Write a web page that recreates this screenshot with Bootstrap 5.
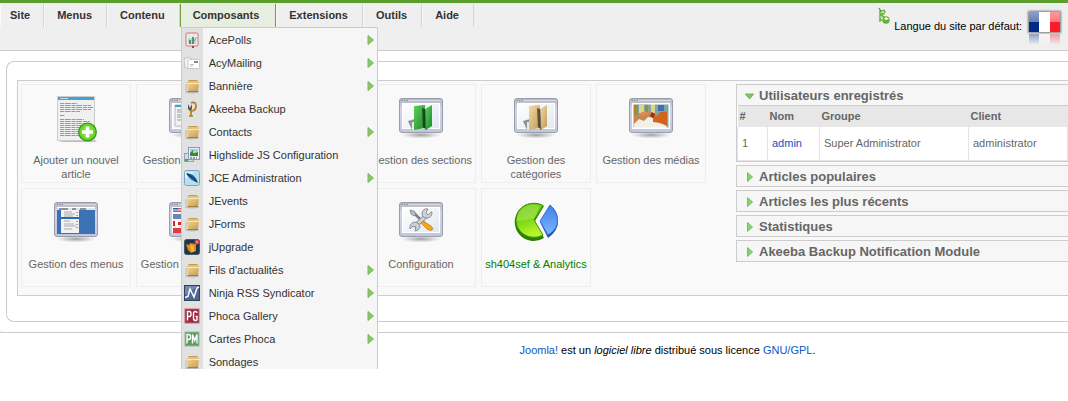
<!DOCTYPE html>
<html lang="fr">
<head>
<meta charset="utf-8">
<meta name="viewport" content="width=device-width, initial-scale=1">
<title>Administration</title>
<link href="https://cdn.jsdelivr.net/npm/bootstrap@5.3.0/dist/css/bootstrap.min.css" rel="stylesheet">
<style>
body{font-family:"Liberation Sans",Arial,sans-serif;font-size:11px;line-height:14px;color:#666;background:#fff}
a{color:#0b55c4;text-decoration:none}
.defs{width:0;height:0}
.topbar{background:#efefef;border-top:3px solid #5c9e2d;border-bottom:1px solid #ccc;height:51px}
.mainmenu{border-top:1px solid #e4ecdc}
.mainmenu>li{border-right:1px solid #d4d4d4;border-left:1px solid #f8f8f8}
.mainmenu>li>a{display:block;font-weight:bold;color:#333;line-height:23px;padding:0 14px 0 12px}
.mainmenu>li:first-child>a{padding-left:9px;padding-right:13px}
.mainmenu>li.opened{background:#e7eddf;border-left:1px solid #6fa03f;border-right:1px solid #6fa03f}
.mainmenu>li.opened>a{padding-right:16px}
.submenu{top:23px;left:0;width:197px;max-height:342px;overflow:hidden;border:1px solid #ccc;border-bottom:0;background:linear-gradient(to right,#e1e1e1 21px,#f6f6f6 21px);z-index:5}
.submenu a{height:23px;color:#333;padding:0 3px 0 2px;gap:9px}
.submenu svg{width:16px;height:16px;flex:none}
.submenu .more{width:7px;height:10px;margin-left:auto}
.lang{color:#000;padding:4px 4px 0 0}
.outerbox{border:1px solid #ccc;border-width:0 0 1px 1px;border-bottom-left-radius:8px;margin-left:-5px;padding:10px 0 10px 10px}
.innerbox{border:1px solid #ccc;border-right:0;border-radius:8px 0 0 8px;padding:18px 0 25px 10px}
.workarea{background:#f9f9f9;border:1px solid #ccc;border-right:0;padding:3px 0 8px 3px;column-gap:30px}
.cpanel{display:grid;grid-template-columns:repeat(6,110px);gap:5px}
.tile{height:99px;border:1px solid #eee;color:#666;text-align:center;padding:9px 2px 0}
.tile svg{display:block;width:48px;height:48px;margin:0 auto 11px}
.tile.analytics{color:green;padding-left:0;padding-right:0;white-space:nowrap}
.sliders{gap:3px}
.slider{border:1px solid #ccc;border-right:0;background:#f6f6f6}
.slider h3{margin:0;font-size:13px;line-height:20px;font-weight:bold}
.slider button{border:0;background:none;color:#666;font-weight:bold;padding:2px 0 0 8px;line-height:18px;gap:5px}
.slider button svg{width:9px;height:10px}
.users{width:100%;background:#fff;border-top:1px solid #ccc}
.users th{background:#e7e7e7;height:21px;padding:0 2px;line-height:20px;font-size:11px}
.users td{height:34px;padding:0 4px;border-right:1px solid #e5e5e5}
.users td:first-child{border-left:1px solid #e5e5e5}
.users tbody tr{border-bottom:1px solid #e5e5e5}
.legal{padding:10px 0 0 25%;color:#000}
</style>
</head>
<body class="min-vh-100">
<svg class="defs position-absolute" aria-hidden="true">
<defs>
<linearGradient id="gFrame" x1="0" y1="0" x2="0" y2="1"><stop offset="0" stop-color="#b4b4c0"/><stop offset=".3" stop-color="#d2d5e2"/><stop offset="1" stop-color="#c0c6dc"/></linearGradient>
<linearGradient id="gScreen" x1="0" y1="0" x2="1" y2="1"><stop offset="0" stop-color="#fff"/><stop offset="1" stop-color="#e3e7f0"/></linearGradient>
<linearGradient id="gGreen" x1="0" y1="0" x2="1" y2="1"><stop offset="0" stop-color="#5fd060"/><stop offset="1" stop-color="#1c8a2b"/></linearGradient>
<linearGradient id="gTan" x1="0" y1="0" x2="1" y2="1"><stop offset="0" stop-color="#f4dca6"/><stop offset="1" stop-color="#c29a55"/></linearGradient>
<linearGradient id="gPie" x1="0" y1="0" x2=".3" y2="1"><stop offset="0" stop-color="#5cb50c"/><stop offset=".5" stop-color="#74d40f"/><stop offset="1" stop-color="#b6f52c"/></linearGradient>
<linearGradient id="gBlue" x1="0" y1="0" x2="0" y2="1"><stop offset="0" stop-color="#3f7fe8"/><stop offset="1" stop-color="#7fb6ff"/></linearGradient>
<linearGradient id="gBox" x1="0" y1="0" x2="1" y2="1"><stop offset="0" stop-color="#f0d594"/><stop offset="1" stop-color="#c79a4d"/></linearGradient>
<radialGradient id="gShade"><stop offset="0" stop-color="#888" stop-opacity=".8"/><stop offset="1" stop-color="#999" stop-opacity="0"/></radialGradient>
<radialGradient id="gPlus"><stop offset="0" stop-color="#9be84a"/><stop offset="1" stop-color="#63cf22"/></radialGradient>
<symbol id="frame" viewBox="0 0 48 48"><ellipse cx="24" cy="41" rx="20" ry="3.5" fill="url(#gShade)"/><rect x="2.5" y="4.500" width="43" height="34" rx="2.500" fill="url(#gFrame)" stroke="#9a9dac"/><path d="M4 6.500h40" stroke="#d9dae0"/><path d="M4.500 6.500h7" stroke="#8a8d98" stroke-dasharray="1.500 1"/><rect x="5.500" y="9.500" width="37" height="25" fill="url(#gScreen)" stroke="#fff"/></symbol>
<symbol id="box" viewBox="0 0 16 16"><ellipse cx="8" cy="14" rx="7" ry="1.500" fill="#b8b8b8"/><path d="M1 7l2-2v9l-2-2z" fill="#d2ccbd"/><path d="M4 2h10l1 3H3z" fill="#e3c27e"/><path d="M5 2h8v1H5z" fill="#c19a55"/><path d="M3 5h12l-1 9H4z" fill="url(#gBox)"/><path d="M3 5.500h12" stroke="#f9e7b8"/><path d="M4 13.500h10" stroke="#a57c38"/></symbol>
<symbol id="arrow" viewBox="0 0 7 10"><path d="M1 0.500L6.500 5 1 9.500z" fill="#8cc86a" stroke="#79b75c"/></symbol>
<symbol id="tri" viewBox="0 0 9 10"><path d="M2.500 .5L7.500 5l-5 4.500z" fill="#8bd46b" stroke="#7dbb5e"/></symbol>
<symbol id="trid" viewBox="0 0 9 10"><path d="M.5 3h8L5 7.500H4z" fill="#7bc957" stroke="#71b14f"/></symbol>
<symbol id="folder" viewBox="0 0 48 48"><path d="M11 27l7-2v11h-3z" fill="#8e9094"/><path d="M15 28h3v8h-3z" fill="#e8e8ea"/><path d="M17 12l11-1v23l-11 2z"/><path d="M25 14l5 2-1 20-3-3z" fill="#0008"/><path d="M28 15l7-4v21l-6 4z"/><path d="M28 15l1 21" stroke="#0004" fill="none"/></symbol>
</defs>
</svg>

<header class="topbar d-flex justify-content-between">
  <ul class="mainmenu list-unstyled d-flex align-items-start flex-grow-1 m-0">
    <li><a href="#">Site</a></li>
    <li><a href="#">Menus</a></li>
    <li><a href="#">Contenu</a></li>
    <li class="opened position-relative"><a href="#">Composants</a>
      <ul class="submenu list-unstyled position-absolute m-0">
        <li><a href="#" class="d-flex align-items-center"><svg viewBox="0 0 16 16"><rect x="2" y="1" width="12" height="13" rx="1" fill="#eee" stroke="#d17777"/><path d="M5 2h5v2H5z" fill="#fff" stroke="#bbb" stroke-width=".5"/><rect x="4" y="6" width="8" height="6" fill="#b9d5df"/><path d="M5 12V8h2v4zM8 12V5h2v7z" fill="#4f9a6d"/><path d="M10.500 9l2-4" stroke="#999"/><path d="M8 14h2v2H8z" fill="#c33"/></svg>AcePolls<svg class="more"><use href="#arrow"/></svg></a></li>
        <li><a href="#" class="d-flex align-items-center"><svg viewBox="0 0 16 16"><path d="M0 4l5-2 3 2v9H1z" fill="#f4f4f4" stroke="#c4c4c4"/><rect x="4" y="4.500" width="11.500" height="9" rx="1" fill="#fff" stroke="#c9c9c9"/><path d="M10 6h2v2h-2z" fill="#6787d3"/><path d="M12 6h2v2h-2z" fill="#d56262"/><path d="M6 9.500h4M6 11h3" stroke="#aaa" stroke-width=".7"/></svg>AcyMailing<svg class="more"><use href="#arrow"/></svg></a></li>
        <li><a href="#" class="d-flex align-items-center"><svg><use href="#box"/></svg>Bannière<svg class="more"><use href="#arrow"/></svg></a></li>
        <li><a href="#" class="d-flex align-items-center"><svg viewBox="0 0 16 16"><path d="M7 2q5-2 5 3 0 5-5 5M7 9v6M5 15h4" fill="none" stroke="#bb7a1c" stroke-width="1.700"/><path d="M4 3l2 4 2-4v5L6 10 4 8z" fill="#555"/></svg>Akeeba Backup</a></li>
        <li><a href="#" class="d-flex align-items-center"><svg><use href="#box"/></svg>Contacts<svg class="more"><use href="#arrow"/></svg></a></li>
        <li><a href="#" class="d-flex align-items-center"><svg viewBox="0 0 16 16"><rect x=".5" y="6.500" width="9" height="8" fill="#cfe0dc" stroke="#8ba6ae"/><path d="M1 12h3v2H1z" fill="#4f9d4a"/><rect x="4.500" y=".5" width="11" height="12" fill="#e7effa" stroke="#8598c4"/><rect x="6" y="2" width="8" height="7" fill="#a4cdf0"/><path d="M6 9V6l3-3 2 3 3-1v4z" fill="#368b35"/><path d="M9 4h2v2H9z" fill="#e3d94e"/><path d="M6 11h7" stroke="#444" stroke-dasharray="2 1"/></svg>Highslide JS Configuration</a></li>
        <li><a href="#" class="d-flex align-items-center"><svg viewBox="0 0 16 16"><rect x=".5" y=".5" width="15" height="15" rx="2" fill="#b8def0" stroke="#74a9c6"/><path d="M1 2h9L1 9z" fill="#e0f3fb"/><path d="M2 3q9 0 12 10Q5 10 2 3z" fill="#1f5f9c"/><path d="M3 4q6 2 10 8" stroke="#082f59" fill="none"/></svg>JCE Administration<svg class="more"><use href="#arrow"/></svg></a></li>
        <li><a href="#" class="d-flex align-items-center"><svg><use href="#box"/></svg>JEvents</a></li>
        <li><a href="#" class="d-flex align-items-center"><svg><use href="#box"/></svg>JForms</a></li>
        <li><a href="#" class="d-flex align-items-center"><svg viewBox="0 0 16 16"><rect x=".5" y=".5" width="15" height="15" rx="2" fill="#1f3647" stroke="#41596b"/><path d="M2 5l3 1 1-2 6 1v7l-5 2-3-3z" fill="#e08a1a"/><path d="M6 6l4 1v6l-3-1z" fill="#f6b53c"/><circle cx="13" cy="3" r="2.500" fill="#d4404c"/><path d="M12 3h2" stroke="#fff" stroke-width=".8"/></svg>jUpgrade</a></li>
        <li><a href="#" class="d-flex align-items-center"><svg><use href="#box"/></svg>Fils d'actualités<svg class="more"><use href="#arrow"/></svg></a></li>
        <li><a href="#" class="d-flex align-items-center"><svg viewBox="0 0 16 16"><rect x=".5" y=".5" width="15" height="15" fill="#4c6690" stroke="#2f4261"/><path d="M1 1h14L1 10z" fill="#7289ad"/><path d="M1 12.500l3-1L6 4l4 8 3-9 2-1" fill="none" stroke="#fff" stroke-width="1.500"/></svg>Ninja RSS Syndicator<svg class="more"><use href="#arrow"/></svg></a></li>
        <li><a href="#" class="d-flex align-items-center"><svg viewBox="0 0 16 16"><rect x="1" y="1" width="14" height="14" fill="#9d2741" stroke="#b96679"/><path d="M3.500 12.500v-9h2q1.500 0 1.500 2.500t-1.500 2.500h-2M13 5q0-1.500-1.800-1.500T9.500 6v4q0 2.500 1.800 2.500T13 11V8.500h-1.500" fill="none" stroke="#fff" stroke-width="1.400"/></svg>Phoca Gallery<svg class="more"><use href="#arrow"/></svg></a></li>
        <li><a href="#" class="d-flex align-items-center"><svg viewBox="0 0 16 16"><rect x="1" y="1" width="14" height="14" fill="#5c9a62" stroke="#94bd98"/><path d="M3 12.500v-9h2q1.500 0 1.500 2.500T5 8.500H3M8.500 12.500v-9l2.200 6 2.300-6v9" fill="none" stroke="#fff" stroke-width="1.400"/></svg>Cartes Phoca<svg class="more"><use href="#arrow"/></svg></a></li>
        <li><a href="#" class="d-flex align-items-center"><svg><use href="#box"/></svg>Sondages</a></li>
      </ul>
    </li>
    <li><a href="#">Extensions</a></li>
    <li><a href="#">Outils</a></li>
    <li><a href="#">Aide</a></li>
  </ul>
  <div class="lang d-flex align-items-start">
    <svg width="12" height="18" viewBox="0 0 12 18" aria-hidden="true"><path d="M1 1l2 3 4-1M2 3v12M2 7l5 4" stroke="#4f9a38" stroke-width="1.200" fill="none"/><path d="M2 8l3-5 3 1-2 4zM1 12l3-2 2 3-3 1z" fill="#6fbe3c"/><circle cx="8" cy="13" r="3.700" fill="#61b52c"/><path d="M6 12l2-2 3 2-3 1z" fill="#fff"/><path d="M3 11l2 1M4 5h2" stroke="#fff"/></svg>
    <span class="ms-1 mt-2 pt-1 pe-1 text-nowrap">Langue du site par défaut:</span>
    <svg width="38" height="42" viewBox="0 0 38 42" role="img" aria-label="Français"><defs><linearGradient id="gl" x1="0" y1="0" x2="0" y2="1"><stop offset="0" stop-color="#fff" stop-opacity=".55"/><stop offset="1" stop-color="#fff" stop-opacity=".4"/></linearGradient><linearGradient id="gf" x1="0" y1="0" x2="0" y2="1"><stop offset="0" stop-color="#efefef" stop-opacity=".6"/><stop offset="1" stop-color="#efefef"/></linearGradient><filter id="fs" x="-20%" y="-20%" width="140%" height="140%"><feGaussianBlur stdDeviation="1.300"/></filter></defs>
      <rect x="2" y="4" width="33" height="22" fill="#777" filter="url(#fs)"/><path fill="#012a87" d="M3 5h10v20H3zM3 27h10v10H3z"/><path fill="#fff" d="M13 5h11v20H13zM13 27h11v10H13z"/><path fill="#fb1c26" d="M24 5h10v20H24zM24 27h10v10H24z"/><path fill="url(#gl)" d="M3 5h31v10H3z"/><path fill="url(#gf)" d="M2 27h33v11H2z"/></svg>
  </div>
</header>

<main>
  <div class="outerbox">
    <div class="innerbox">
      <div class="workarea d-flex">
        <div class="cpanel flex-shrink-0">
          <a class="tile" href="#"><svg viewBox="0 0 48 48"><ellipse cx="26" cy="47" rx="19" ry="1.500" fill="#bbb"/><path d="M5.500 2.500h37v44h-37z" fill="#f0f0f0" stroke="#ccc"/><path d="M6 3h36v3H6z" fill="#3fa3d8"/><path d="M8 4.500h8" stroke="#b8e0f5"/><path d="M8 9.500h17M8 11.500h31M8 13.500h33M8 15.500h31M8 17.500h20M8 21.500h5M8 25.500h24M8 27.500h30M8 29.500h28M8 31.500h31M8 33.500h30M8 35.500h24M8 37.500h22M8 39.500h20M8 41.500h22" stroke="#999" stroke-dasharray="4 .7 6 .8"/><circle cx="35.500" cy="38" r="8.800" fill="url(#gPlus)" stroke="#3c9b19" stroke-width="1.300"/><path d="M35.500 32.500v11M30 38h11" stroke="#fff" stroke-width="3.600"/></svg>Ajouter un nouvel article</a>
          <a class="tile" href="#"><svg viewBox="0 0 48 48"><use href="#frame"/><path d="M8 11h18v21H8z" fill="#f3f3f3" stroke="#bbb"/><path d="M8 11h18v2H8z" fill="#3fa3d8"/><path d="M10 16h6M10 18h14M10 21h14M10 23h14M10 26h14" stroke="#999"/></svg>Gestion des articles</a>
          <div class="tile"></div>
          <a class="tile" href="#"><svg viewBox="0 0 48 48"><use href="#frame"/><use href="#folder" fill="url(#gGreen)"/></svg>Gestion des sections</a>
          <a class="tile" href="#"><svg viewBox="0 0 48 48"><use href="#frame"/><use href="#folder" fill="url(#gTan)"/></svg>Gestion des catégories</a>
          <a class="tile" href="#"><svg viewBox="0 0 48 48"><use href="#frame"/><path d="M6 10h36v24H6z" fill="#7aa9a4"/><path d="M6 10h5v14H6zM18 10h3v10h-3z" fill="#a9883e"/><path d="M12 11h5v8h-5zM24 10h4v9h-4z" fill="#d9d98a"/><path d="M31 11h6v6h-6z" fill="#476bb0"/><path d="M6 22l7-2 12-2 2 16H6z" fill="#c7884f"/><path d="M7 30l5-5 5 2 4-4 6 1 5 5 7 1 1 4H7z" fill="#f4efe6"/><path d="M26 20l4 2 3-4h7v14l-7-3-7-1z" fill="#d2651c"/><path d="M25 18l3 2-2 4-3-2z" fill="#b32218"/><path d="M11 20l7-3 4 2-7 3z" fill="#e18a5c"/><path d="M6 10h36v24H6z" fill="none" stroke="#fff"/></svg>Gestion des médias</a>
          <a class="tile" href="#"><svg viewBox="0 0 48 48"><use href="#frame"/><path d="M5 10h38v26H5z" fill="#3a72b4"/><path d="M5 10h38v2H5z" fill="#dfe3ea"/><path d="M7 11h9M20 11h4M28 11h6" stroke="#345"/><path d="M9 12h18v23H9z" fill="#f2f2f2"/><path d="M9 19h18v2H9z" fill="#2d69b8"/><path d="M12 14h8M12 16h11M12 18h9M12 23h6M12 26h10M12 28h12M12 31h8" stroke="#aaa"/><path d="M25 14v4M25 23v9" stroke="#555" stroke-dasharray="1 2"/></svg>Gestion des menus</a>
          <a class="tile" href="#"><svg viewBox="0 0 48 48"><use href="#frame"/><path d="M6 10h14v4H6z" fill="#cc5566"/><path d="M6 10h5v3H6z" fill="#35559b"/><path d="M6 12h14" stroke="#fff"/><path d="M6 16h14v5H6z" fill="#6b86b0"/><path d="M6 23h14v5H6z" fill="#fff"/><path d="M6 23h2v5H6zM11 24h3v3h-3zM18 23h2v5h-2z" fill="#e02020"/><path d="M6 30h14v5H6z" fill="#e23b3b"/></svg>Gestion des langues</a>
          <div class="tile"></div>
          <a class="tile" href="#"><svg viewBox="0 0 48 48"><use href="#frame"/><path d="M16 14l14 14" stroke="#7d7f85" stroke-width="2.600"/><path d="M13 12l4 1 2 3-2 2-3-2z" fill="#b9bbc0" stroke="#808288" stroke-width=".8"/><path d="M17 29L29 18" stroke="#8d9097" stroke-width="4.500"/><path d="M17 29L29 18" stroke="#d3d5da" stroke-width="3"/><path d="M34 14l-3 3-2-2 2-4q-5-1-6 4 0 5 5 5t5-6zM13 31l3-3 3 1-1 4q5-1 5-5-1-4-6-4-5 2-4 7z" fill="#cfd1d7" stroke="#85888f" stroke-width=".9"/><path d="M26 23l8 5q3 3 1 4t-5-1l-6-6z" fill="#f4a91c" stroke="#c77a0d" stroke-width=".8"/></svg>Configuration</a>
          <a class="tile analytics" href="#"><svg viewBox="0 0 48 48"><path d="M32 8A19 19 0 1 0 32 40L23 23z" fill="#2c7f06"/><path d="M31 7.500A18 17 0 1 0 31 37L22 22z" fill="url(#gPie)" stroke="#3c980a"/><path d="M28 8Q15 3 7 14q-3 7-2 9 9 0 17-3z" fill="#b7ee74" opacity=".45"/><path d="M38 7q8 6 8 16t-10 17L28 24z" fill="#1b4fa8"/><path d="M38 7q7 6 7.500 15T36 37l-8-14z" fill="url(#gBlue)" stroke="#2d6ad6" stroke-width=".8"/></svg>sh404sef &amp; Analytics</a>
        </div>

        <div class="sliders d-flex flex-column flex-grow-1">
          <section class="slider">
            <h3><button type="button" class="d-flex align-items-center w-100"><svg><use href="#trid"/></svg>Utilisateurs enregistrés</button></h3>
            <table class="users">
              <colgroup><col style="width:30px"><col style="width:52px"><col style="width:149px"><col></colgroup>
              <thead><tr><th scope="col">#</th><th scope="col">Nom</th><th scope="col">Groupe</th><th scope="col">Client</th></tr></thead>
              <tbody><tr><td>1</td><td><a href="#">admin</a></td><td>Super Administrator</td><td>administrator</td></tr></tbody>
            </table>
          </section>
          <section class="slider"><h3><button type="button" class="d-flex align-items-center w-100"><svg><use href="#tri"/></svg>Articles populaires</button></h3></section>
          <section class="slider"><h3><button type="button" class="d-flex align-items-center w-100"><svg><use href="#tri"/></svg>Articles les plus récents</button></h3></section>
          <section class="slider"><h3><button type="button" class="d-flex align-items-center w-100"><svg><use href="#tri"/></svg>Statistiques</button></h3></section>
          <section class="slider"><h3><button type="button" class="d-flex align-items-center w-100"><svg><use href="#tri"/></svg>Akeeba Backup Notification Module</button></h3></section>
        </div>
      </div>
    </div>
  </div>
</main>
<footer class="legal text-center"><a href="#">Joomla!</a> est un <em>logiciel libre</em> distribué sous licence <a href="#">GNU/GPL</a>.</footer>
<script src="https://cdn.jsdelivr.net/npm/bootstrap@5.3.0/dist/js/bootstrap.bundle.min.js"></script>
</body>
</html>
